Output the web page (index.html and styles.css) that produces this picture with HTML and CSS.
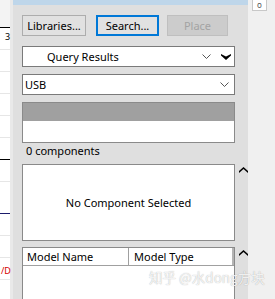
FILE: index.html
```html
<!DOCTYPE html>
<html lang="en">
<head>
    <meta charset="UTF-8">
    <title>Components</title>
    <link rel="stylesheet" href="styles.css">
</head>
<body>
    <div class="screen">
        <div class="doc">
            <div class="doc-head"></div>
            <div class="doc-row"><span class="num">3</span></div>
            <div class="doc-row"></div>
            <div class="doc-row"></div>
            <div class="doc-row"></div>
            <div class="doc-row"></div>
            <div class="doc-row dark"></div>
            <div class="doc-row"></div>
            <div class="doc-row tall navy"></div>
            <div class="doc-row"></div>
            <div class="doc-row"></div>
            <div class="doc-row"><span class="red">/D</span></div>
        </div>

        <div class="panel">
            <div class="titlebar"></div>
            <div class="content">
                <div class="buttons">
                    <button class="btn">Libraries...</button>
                    <button class="btn focused">Search...</button>
                    <button class="btn disabled">Place</button>
                </div>

                <div class="field combo query">
                    <span class="label">Query Results</span>
                    <svg class="chev" width="9" height="5" viewBox="0 0 9 5"><path d="M0.5 0.5 L4.5 4.5 L8.5 0.5" fill="none" stroke="#555" stroke-width="1"/></svg>
                    <svg class="drop" width="10" height="6" viewBox="0 0 10 6"><path d="M0 0 L5 2.5 L10 0 L10 1.5 L5 6 L0 1.5 Z" fill="#000"/></svg>
                </div>

                <div class="field combo">
                    <span class="label">USB</span>
                    <svg class="chev" width="9" height="5" viewBox="0 0 9 5"><path d="M0.5 0.5 L4.5 4.5 L8.5 0.5" fill="none" stroke="#555" stroke-width="1"/></svg>
                </div>

                <div class="list">
                    <div class="list-head"></div>
                </div>

                <div class="count">0 components</div>

                <div class="with-arrow">
                    <div class="preview">No Component Selected</div>
                    <svg class="up" width="9" height="6" viewBox="0 0 9 6"><path d="M0 4 L4.5 0 L9 4 L9 6 L4.5 2 L0 6 Z" fill="#000"/></svg>
                </div>

                <div class="with-arrow">
                    <div class="models">
                        <div class="models-head">
                            <div class="col name">Model Name</div>
                            <div class="col type">Model Type</div>
                        </div>
                    </div>
                    <svg class="up" width="9" height="6" viewBox="0 0 9 6"><path d="M0 4 L4.5 0 L9 4 L9 6 L4.5 2 L0 6 Z" fill="#000"/></svg>
                </div>
            </div>
        </div>

        <div class="side">
            <div class="tab">o</div>
        </div>

        <div class="watermark">知乎 @水dong方块</div>
    </div>
</body>
</html>
```

FILE: styles.css
```css
body {
    margin: 0;
    font-family: "Noto Sans", "Open Sans", sans-serif;
    font-size: 11px;
    color: #000;
    background: #f0f0f0;
    overflow: hidden;
}

.screen {
    position: relative;
    display: flex;
    width: 275px;
    height: 299px;
    overflow: hidden;
}

/* left document strip */
.doc {
    width: 10px;
    background: #fff;
    display: flex;
    flex-direction: column;
}

.doc-head {
    height: 27px;
    background: #f3f3f3;
    border-bottom: 1px solid #000;
}

.doc-row {
    height: 21px;
    border-bottom: 1px solid #e6e6e6;
    position: relative;
}

.doc-row.dark {
    border-bottom-color: #000;
}

.doc-row.tall {
    height: 31px;
}

.doc-row.navy {
    border-bottom-color: #1b1b6b;
}

.num {
    font-size: 9px;
    line-height: 18px;
    padding-left: 5px;
}

.red {
    display: block;
    color: #d40000;
    font-size: 9px;
    padding-top: 6px;
    margin-left: 1px;
}

/* panel */
.panel {
    width: 238px;
    background: #dfdfdf;
    border-left: 3px solid #e9e9e9;
    box-sizing: border-box;
}

.titlebar {
    height: 5px;
    background: #bed6ea;
}

.content {
    padding: 10px 0 0 9px;
}

.buttons {
    display: flex;
    height: 21px;
}

.btn {
    box-sizing: border-box;
    height: 21px;
    width: 64px;
    padding: 0;
    font-family: inherit;
    font-size: 11px;
    background: #e1e1e1;
    border: 1px solid #adadad;
    color: #000;
}

.btn.focused {
    width: 63px;
    margin-left: 10px;
    border: 2px solid #0078d7;
}

.btn.disabled {
    width: 61px;
    margin-left: 8px;
    background: #cccccc;
    border-color: #bfbfbf;
    color: #a3a3a3;
}

.field {
    box-sizing: border-box;
    width: 213px;
    height: 21px;
    background: #fff;
    border: 1px solid #7a7a7a;
    display: flex;
    align-items: center;
}

.query {
    margin-top: 10px;
}

.combo {
    margin-bottom: 7px;
}

.combo .label {
    flex: 1;
    padding-left: 2px;
}

.query .label {
    padding-left: 24px;
}

.chev {
    margin-right: 5px;
}

.query .chev {
    margin-right: 10px;
}

.drop {
    margin-right: 3px;
}

.list {
    box-sizing: border-box;
    width: 213px;
    height: 41px;
    background: #fff;
    border: 1px solid #8a8a8a;
}

.list-head {
    height: 18px;
    background: #a0a0a0;
}

.count {
    height: 21px;
    line-height: 16px;
    padding-left: 4px;
}

.with-arrow {
    display: flex;
    align-items: flex-start;
    margin-bottom: 6px;
}

.up {
    margin: 3px 0 0 4px;
}

.preview {
    box-sizing: border-box;
    width: 213px;
    height: 77px;
    background: #fff;
    border: 1px solid #8a8a8a;
    display: flex;
    align-items: center;
    justify-content: center;
}

.models {
    box-sizing: border-box;
    width: 213px;
    height: 60px;
    background: #fff;
    border: 1px solid #8a8a8a;
}

.models-head {
    display: flex;
    height: 17px;
    border-bottom: 1px solid #a0a0a0;
}

.col {
    line-height: 17px;
    padding-left: 4px;
}

.col.name {
    width: 101px;
    border-right: 1px solid #a0a0a0;
}

.col.type {
    flex: 1;
    padding-left: 5px;
    border-right: 2px solid #b4b4b4;
}

/* right strip */
.side {
    flex: 1;
    background: #f0f0f0;
}

.tab {
    width: 13px;
    height: 10px;
    margin-left: 4px;
    background: #fff;
    border: 1px solid #c8c8c8;
    border-top: none;
    font-size: 8px;
    line-height: 9px;
    text-align: center;
    color: #555;
}

.watermark {
    position: absolute;
    left: 149px;
    top: 267px;
    font-family: "Noto Sans CJK SC", "Noto Sans", sans-serif;
    font-size: 13.5px;
    color: rgba(255, 255, 255, 0.85);
    text-shadow: 0 0 1px rgba(0, 0, 0, 0.35);
    white-space: nowrap;
}
```
